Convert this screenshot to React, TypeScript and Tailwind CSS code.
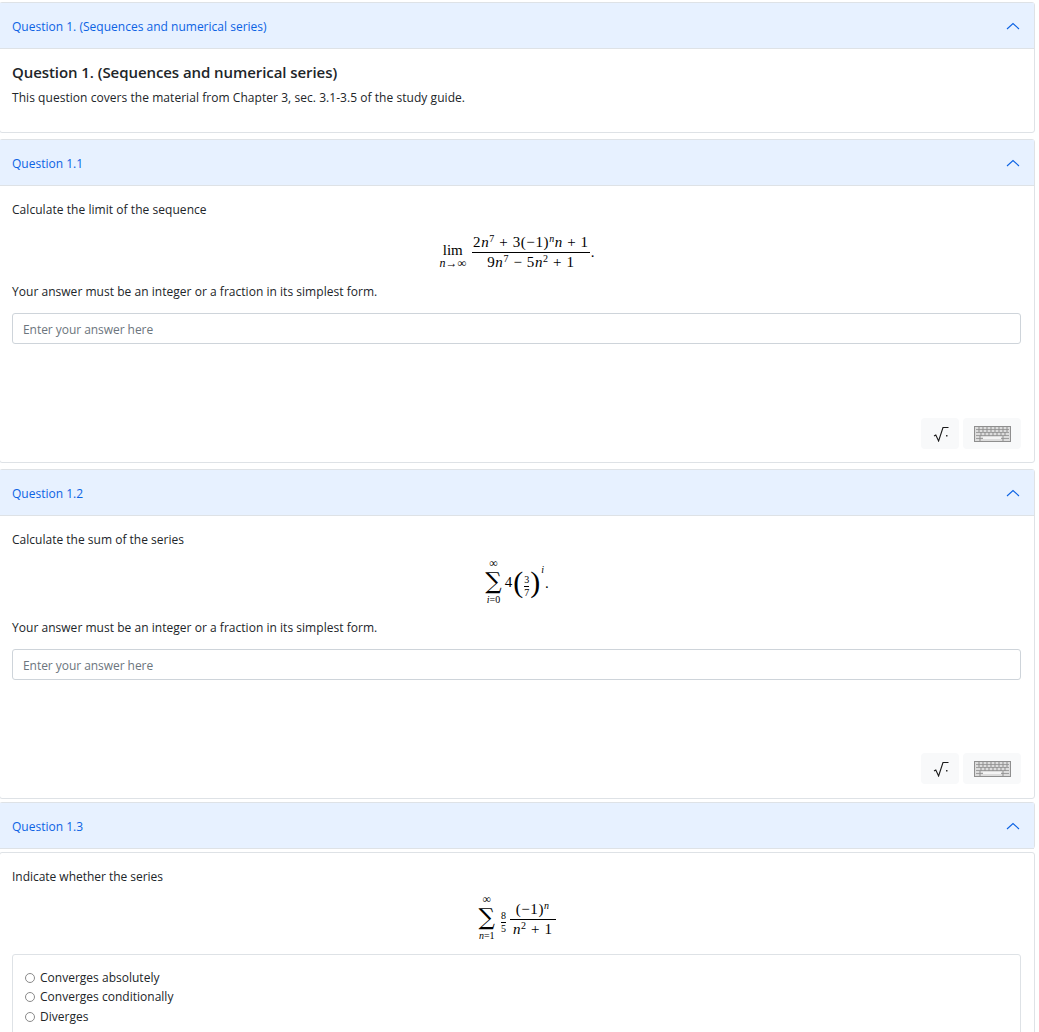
import type { ReactNode } from 'react'

const uiFont = "font-['Open_Sans',sans-serif]"
const mathFont = "font-['Liberation_Serif',serif]"

// ─── ACCORDION HEADER ────────────────────────────────────────────

function Header({ title }: { title: string }) {
  return (
    <div className="flex h-[46px] items-center justify-between border-b border-[#dee2e6] bg-[#e7f1ff] pl-3 pr-[14px]">
      <span className="pt-[2px] text-[12px] tracking-[0.01px] text-[#0c63e4]">{title}</span>
      <svg width="14" height="8" viewBox="0 0 14 8" fill="none" stroke="#0c63e4" strokeWidth="1.1">
        <path d="M1 7 L7 1.5 L13 7" />
      </svg>
    </div>
  )
}

// ─── MATH HELPERS ────────────────────────────────────────────────

function Frac({ top, bottom, small }: { top: ReactNode; bottom: ReactNode; small?: boolean }) {
  return (
    <span className={`inline-flex flex-col items-center ${small ? 'text-[10px] leading-[10px]' : ''}`}>
      <span className={`whitespace-nowrap ${small ? 'pb-px' : 'px-px leading-[20px]'}`}>{top}</span>
      <span className="h-px w-full bg-black" />
      <span className={`whitespace-nowrap ${small ? 'pt-px' : 'leading-[18px]'}`}>{bottom}</span>
    </span>
  )
}

function Sum({ from }: { from: string }) {
  return (
    <span className="inline-flex flex-col items-center leading-none">
      <span className="h-[9px] text-[12px] leading-[9px]">∞</span>
      <span className="font-['DejaVu_Serif',serif] text-[23px] leading-[27px]">∑</span>
      <span className="h-[10px] text-[10px] leading-[10px]"><i>{from[0]}</i>{from.slice(1)}</span>
    </span>
  )
}

function Keypad() {
  return (
    <div className="flex justify-end gap-1 pr-[13px]">
      <div className="flex h-[31px] w-[38px] items-center justify-center rounded bg-[#f8f9fa] pl-[2px]">
        <svg width="17" height="16" viewBox="0 0 17 16" fill="none">
          <path d="M1 10 L2.8 9 L5.6 15 L10 1.5 H15.5" stroke="#1a1a1a" strokeWidth="1.1" />
          <rect x="13" y="9" width="1.5" height="1.5" fill="#333" />
        </svg>
      </div>
      <div className="flex h-[31px] w-[58px] items-center justify-center rounded bg-[#f8f9fa]">
        <svg width="37" height="16" viewBox="0 0 37 16">
          <rect x="0.5" y="0.5" width="36" height="15" fill="#dcdcdc" stroke="#8f8f8f" />
          <path d="M2 3.5H35M2 6.5H35M2 9.5H35M2 12.5H35" stroke="#a0a0a0" strokeWidth="1" />
          <path d="M5 1V6M9 1V6M13 1V6M17 1V6M21 1V6M25 1V6M29 1V6M33 1V6M7 6V10M11 6V10M15 6V10M19 6V10M23 6V10M27 6V10M31 6V10M6 10V15M29 10V15" stroke="#8f8f8f" strokeWidth="1" />
          <rect x="9" y="11" width="18" height="2" fill="#f4f4f4" />
        </svg>
      </div>
    </div>
  )
}

function AnswerInput() {
  return (
    <div className="flex h-[31px] items-center rounded-[3px] border border-[#ced4da] bg-white px-[10px] pt-[2px] text-[12px] tracking-[-0.05px] text-[#6c757d]">
      Enter your answer here
    </div>
  )
}

// ─── MAIN COMPONENT ──────────────────────────────────────────────

export default function App() {
  return (
    <div className={`h-[1032px] w-[1039px] overflow-hidden bg-white pr-[4px] pt-[2px] text-[12px] tracking-[0.01px] text-[#212529] ${uiFont}`}>

      {/* Section intro */}
      <section className="-ml-px h-[131px] rounded-[3px] border border-[#dee2e6]">
        <Header title="Question 1. (Sequences and numerical series)" />
        <h2 className="mt-[13px] pl-3 text-[15px] font-semibold leading-[20px] tracking-[-0.07px]">
          Question 1. (Sequences and numerical series)
        </h2>
        <p className="mt-[8px] pl-3 leading-[16px] tracking-[0.05px]">
          This question covers the material from Chapter 3, sec. 3.1-3.5 of the study guide.
        </p>
      </section>

      {/* Question 1.1 */}
      <section className="-ml-px mt-[6px] h-[324px] rounded-[3px] border border-[#dee2e6]">
        <Header title="Question 1.1" />
        <p className="mt-[16px] pl-3 leading-[16px] tracking-[0.05px]">Calculate the limit of the sequence</p>
        <div className={`mt-[14px] flex h-[38px] items-center justify-center gap-[6px] text-[15px] tracking-normal text-black ${mathFont}`}>
          <span className="inline-flex translate-y-[5px] flex-col items-center">
            <span className="text-[15px] leading-[15px]">lim</span>
            <span className="text-[12px] italic leading-[11px]">n→∞</span>
          </span>
          <Frac
            top={<span className="tracking-[0.6px]">2<i>n</i><sup className="text-[10px]">7</sup> + 3(−1)<sup className="text-[10px]"><i>n</i></sup><i>n</i> + 1</span>}
            bottom={<span className="tracking-[0.6px]">9<i>n</i><sup className="text-[10px]">7</sup> − 5<i>n</i><sup className="text-[10px]">2</sup> + 1</span>}
          />
          <span className="-ml-[5px] translate-y-[1px]">.</span>
        </div>
        <p className="mt-[14px] pl-3 leading-[16px] tracking-[0.03px]">Your answer must be an integer or a fraction in its simplest form.</p>
        <div className="mt-[13px] pl-3 pr-[13px]"><AnswerInput /></div>
        <div className="mt-[74px]"><Keypad /></div>
      </section>

      {/* Question 1.2 */}
      <section className="-ml-px mt-[6px] h-[330px] rounded-[3px] border border-[#dee2e6]">
        <Header title="Question 1.2" />
        <p className="mt-[16px] pl-3 leading-[16px]">Calculate the sum of the series</p>
        <div className={`mt-[11px] flex h-[46px] items-center justify-center text-[15px] tracking-normal text-black ${mathFont}`}>
          <Sum from="i=0" />
          <span className="ml-[3px]">4</span>
          <span className="ml-[1px] text-[30px] font-light leading-[30px]">(</span>
          <span className="mx-[1px]"><Frac small top="3" bottom="7" /></span>
          <span className="text-[30px] font-light leading-[30px]">)</span>
          <span className="-mt-[24px] ml-[1px] text-[10px] italic leading-[10px]">i</span>
          <span className="ml-[1px] translate-y-[1px]">.</span>
        </div>
        <p className="mt-[15px] pl-3 leading-[16px] tracking-[0.03px]">Your answer must be an integer or a fraction in its simplest form.</p>
        <div className="mt-[13px] pl-3 pr-[13px]"><AnswerInput /></div>
        <div className="mt-[73px]"><Keypad /></div>
      </section>

      {/* Question 1.3 header */}
      <section className="-ml-px mt-[3px] h-[47px] rounded-[3px] border border-[#dee2e6]">
        <Header title="Question 1.3" />
      </section>

      {/* Question 1.3 body */}
      <section className="-ml-px mt-[3px] h-[200px] rounded-t-[3px] border border-[#dee2e6]">
        <p className="mt-[16px] pl-3 leading-[16px] tracking-[-0.03px]">Indicate whether the series</p>
        <div className={`mt-[9px] flex h-[48px] items-center justify-center text-[15px] tracking-normal text-black ${mathFont}`}>
          <Sum from="n=1" />
          <span className="ml-[6px] mr-[4px]"><Frac small top="8" bottom="5" /></span>
          <Frac
            top={<span className="tracking-[0.6px]">(−1)<sup className="text-[10px] italic">n</sup></span>}
            bottom={<span className="px-[3px] tracking-[0.6px]"><i>n</i><sup className="text-[10px]">2</sup> + 1</span>}
          />
        </div>
        <div className="ml-3 mr-[13px] mt-[12px] h-[90px] rounded-[3px] border border-[#dee2e6] px-[12px] pt-[13px] text-[12px]">
          {['Converges absolutely', 'Converges conditionally', 'Diverges'].map(label => (
            <label key={label} className="flex h-[19.5px] items-center gap-[5px]">
              <span className="h-[10px] w-[10px] rounded-full border border-[#8a8a8a] bg-white" />
              {label}
            </label>
          ))}
        </div>
      </section>
    </div>
  )
}
